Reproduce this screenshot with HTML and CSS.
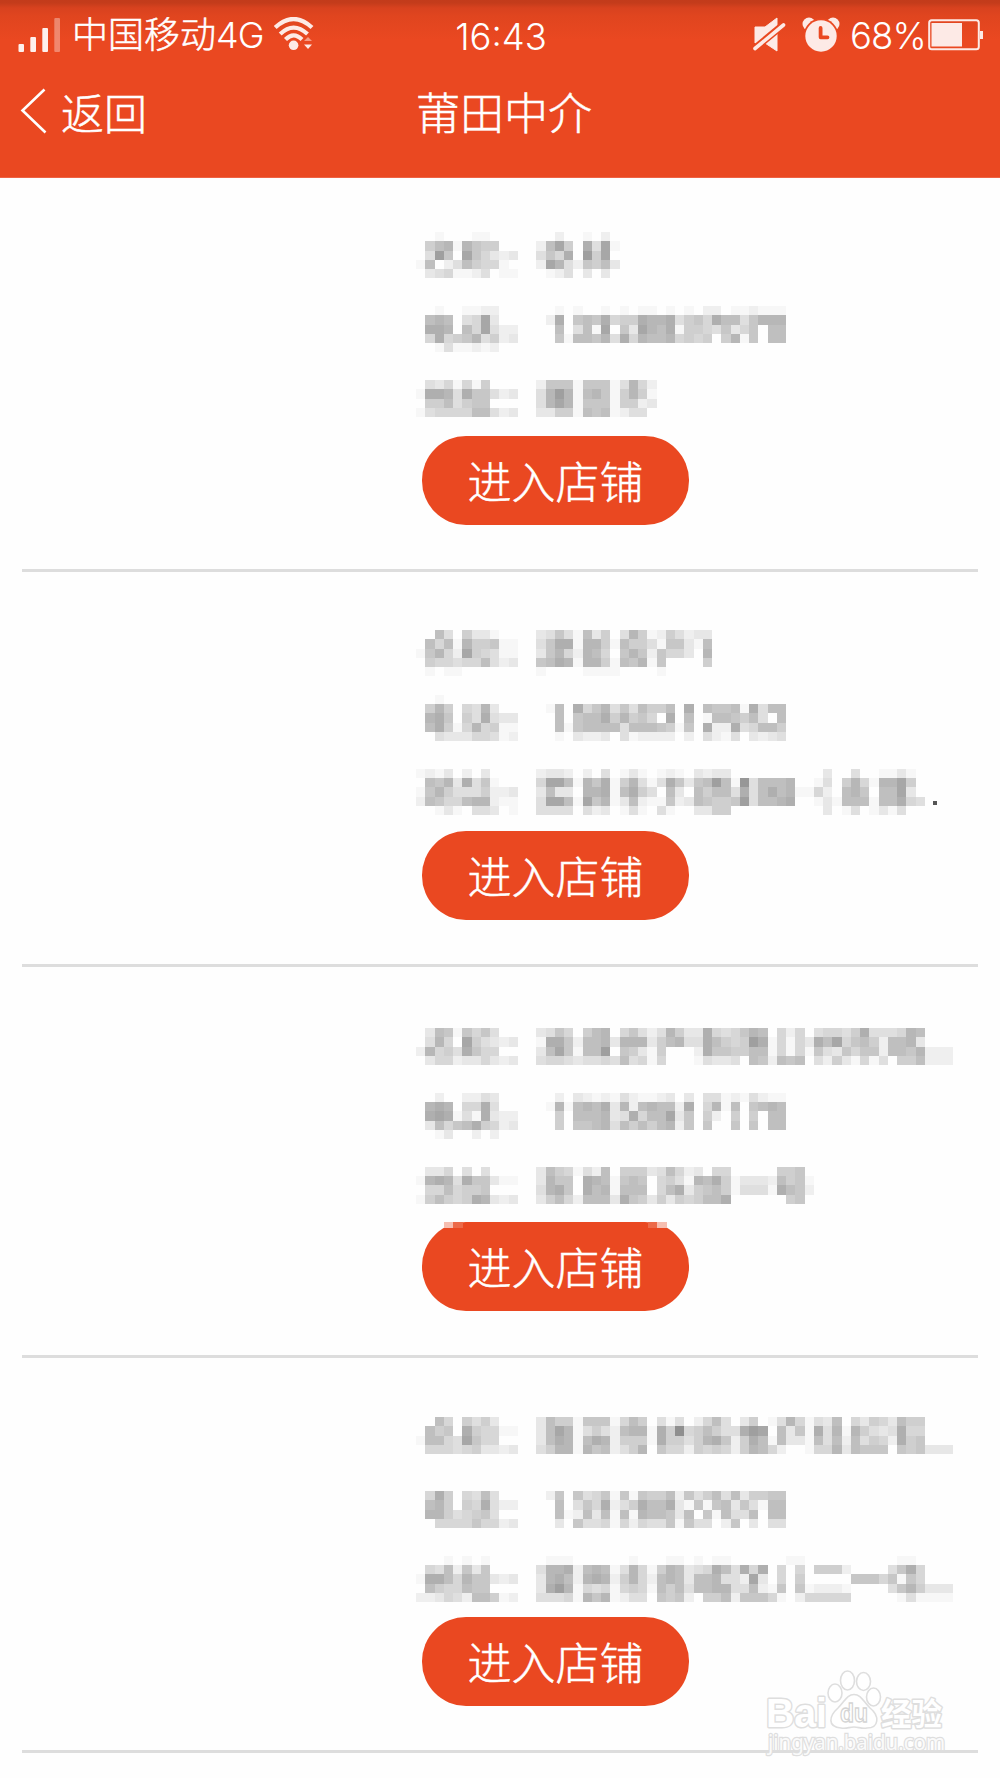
FILE: index.html
```html
<!DOCTYPE html>
<html lang="zh-CN">
<head>
<meta charset="utf-8">
<title>莆田中介</title>
<link rel="stylesheet" href="styles.css">
</head>
<body>
<header class="header">
  <div class="status">
    <div class="status-left">
      <svg class="signal" width="44" height="36" viewBox="0 0 44 36" fill="#fff">
        <rect x="0.5" y="27" width="5.5" height="8" rx="1" opacity=".92"/><rect x="12.3" y="20" width="5.7" height="15" rx="1" opacity=".92"/><rect x="24.3" y="11" width="5.7" height="24" rx="1" opacity=".92"/><rect x="36.3" y="1" width="5.7" height="34" rx="1" opacity=".35"/>
      </svg>
      <span class="carrier">中国移动<span class="net">4G</span></span>
      <svg class="wifi" width="40" height="34" viewBox="0 0 40 34" fill="none" stroke="#fdeae6" stroke-width="4.2">
        <path d="M1.2 10.5Q19.500-6.500 38 10.500M6.200 17Q19.500 4.200 33.500 17M11.500 22.500Q19.500 14.200 28 22.500"/>
        <circle cx="19.600" cy="28.300" r="4.800" fill="#fdeae6" stroke="none"/>
        <path d="M30 24L34 20L38 24Z" fill="#f59a83" stroke="none"/><path d="M30 27.500L34 32L38 27.500Z" fill="#fdeae6" stroke="none"/>
      </svg>
    </div>
    <div class="clock">16:43</div>
    <div class="status-right">
      <svg class="mute" width="33" height="36" viewBox="0 0 33 36">
        <path d="M2 10H12L24 1V34L12 26H2Z" fill="#fdeae6" stroke="#fdeae6" stroke-width="1" stroke-linejoin="round"/>
        <path d="M1 32L30 8" stroke="#ea4821" stroke-width="7"/>
        <path d="M2 31.500L30.500 8" stroke="#fdeae6" stroke-width="3.600" stroke-linecap="round"/>
      </svg>
      <svg class="alarm" width="38" height="36" viewBox="0 0 38 36">
        <circle cx="7" cy="7" r="6.500" fill="#fdeae6"/><circle cx="31" cy="7" r="6.500" fill="#fdeae6"/>
        <circle cx="19" cy="19" r="17.500" fill="#ea4821"/><circle cx="19" cy="19" r="15.700" fill="#fdeae6"/>
        <path d="M18.600 11V20.300H25.500" fill="none" stroke="#ea4821" stroke-width="3.800" stroke-linecap="round" stroke-linejoin="round"/>
      </svg>
      <span class="percent">68%</span>
      <svg class="battery" width="56" height="32" viewBox="0 0 56 32">
        <rect x="1.200" y="1.200" width="49.600" height="29" rx="2.500" fill="none" stroke="#fdeae6" stroke-width="2"/>
        <rect x="3.500" y="4" width="30.500" height="23.500" fill="#fdeae6"/><rect x="52" y="12" width="3" height="8" fill="#fdeae6"/>
      </svg>
    </div>
  </div>
  <nav class="nav">
    <a class="back">
      <svg width="28" height="48" viewBox="0 0 28 48"><path d="M24.500 2.500L2.500 23.500L25.500 45.500" fill="none" stroke="#fff" stroke-width="2.600"/></svg>
      <span>返回</span>
    </a>
    <h1 class="title">莆田中介</h1>
  </nav>
</header>

<main class="shops">
  <section class="shop shop-1"><div class="info"><svg class="mosaic" data-shop="0"></svg><button class="enter">进入店铺</button></div></section>
  <section class="shop shop-2"><div class="info"><svg class="mosaic" data-shop="1"></svg><i class="dot"></i><button class="enter">进入店铺</button></div></section>
  <section class="shop shop-3"><div class="info"><svg class="mosaic" data-shop="2"></svg><button class="enter"><i class="notch notch-left"></i>进入店铺<i class="notch notch-right"></i></button></div></section>
  <section class="shop shop-4"><div class="info"><svg class="mosaic" data-shop="3"></svg><button class="enter">进入店铺</button></div></section>
</main>

<svg class="watermark" width="200" height="100" viewBox="0 0 200 100">
  <g fill="#fff" stroke="#dedede" stroke-width="1.600">
    <ellipse cx="75" cy="33" rx="7" ry="9"/><ellipse cx="87.500" cy="20.500" rx="7" ry="9.500"/><ellipse cx="103.500" cy="21.500" rx="7" ry="9"/><ellipse cx="113.500" cy="37" rx="7" ry="9"/>
    <path d="M94 34.500C101 34.500 103 41 110 48C120 56 119 68 107 68C101 69 99 67 94 67C89 67 87 69 81 68C67 67 69 56 78 48C85 41 87 34.500 94 34.500Z"/>
    <g class="wm-bold" paint-order="stroke" stroke-width="3" stroke-linejoin="round">
      <text x="6" y="66.500" font-size="41" textLength="61" lengthAdjust="spacingAndGlyphs">Bai</text>
      <text x="121" y="65" font-size="31" textLength="61" lengthAdjust="spacingAndGlyphs">经验</text>
    </g>
    <text class="wm-du" x="80" y="62" font-size="25" textLength="28" lengthAdjust="spacingAndGlyphs" stroke="#d4d4d4" stroke-width="1.300">du</text>
    <text class="wm-url" x="8" y="90" font-size="21" textLength="177" lengthAdjust="spacingAndGlyphs" paint-order="stroke" stroke-width="2.500" fill-opacity=".9">jingyan.baidu.com</text>
  </g>
</svg>
<script src="mosaic.js"></script>
</body>
</html>
```

FILE: styles.css
```css
* { box-sizing: border-box; }

body {
  margin: 0;
  width: 1000px;
  height: 1778px;
  position: relative;
  overflow: hidden;
  background: #fefefe;
  font-family: "Noto Sans CJK SC", sans-serif;
  font-weight: 300;
}

svg { display: block; flex: none; }

.header {
  height: 178px;
  color: #fff;
  background: linear-gradient(#c23b1b 0, #c43c1b 3px, #d8421f 8px, #e0451f 16px, #ea4821 40px);
  border-bottom: 1px solid #ee6244;
}

.status {
  display: grid;
  grid-template-columns: 1fr auto 1fr;
  align-items: center;
  height: 70px;
  padding: 0 16px 0 18px;
}

.status-left, .status-right { display: flex; align-items: center; }
.status-right { justify-content: flex-end; }
.carrier {
  margin: -3px 0 0 10px;
  font-size: 36px;
  line-height: 52px;
  white-space: nowrap;
  -webkit-text-stroke: 0.5px #fff;
}
.net, .clock, .percent { font-family: Inter, sans-serif; -webkit-text-stroke: 0; }
.net { font-size: 36px; letter-spacing: -0.8px; }
.wifi { margin: 0 0 2px 10px; }
.clock, .percent { font-size: 36.5px; line-height: 44px; }
.clock { padding-top: 3px; }
.alarm { margin-left: 16px; }
.percent { margin-left: 10px; padding-top: 1px; letter-spacing: -0.8px; }
.battery { margin-left: 2px; }

.nav {
  display: grid;
  grid-template-columns: 1fr auto 1fr;
  align-items: center;
  height: 82px;
  padding: 0 20px;
  -webkit-text-stroke: 0.5px #fff;
}

.back { display: flex; align-items: center; gap: 13px; font-size: 43px; line-height: 60px; }
.title { margin: 0; padding-left: 8px; font-size: 44px; line-height: 60px; font-weight: 300; }

.shop {
  margin: 0 22px;
  padding-left: 394px;
  border-bottom: 3px solid #ddd;
}
.shop-1 { height: 394px; padding-top: 54px; }
.shop-2 { height: 395px; padding-top: 58px; }
.shop-3 { height: 391px; padding-top: 61px; }
.shop-4 { height: 395px; padding-top: 59px; }

.info {
  position: relative;
  display: flex;
  flex-direction: column;
  align-items: flex-start;
  height: 293px;
  justify-content: space-between;
}
.shop-2 .info { height: 290px; }
.shop-3 .info { height: 283px; }
.shop-4 .info { height: 289px; }

.enter {
  position: relative;
  width: 267px;
  height: 89px;
  margin-left: 6px;
  padding: 0 0 1px;
  border: 0;
  border-radius: 44px;
  background: #ea4821;
  color: #fff;
  font: 300 44px/60px "Noto Sans CJK SC", sans-serif;
  -webkit-text-stroke: 0.5px #fff;
}

.dot {
  position: absolute;
  left: 517px;
  top: 171px;
  width: 4px;
  height: 4px;
  background: #555;
}

.notch {
  position: absolute;
  top: 0;
  width: 19px;
  height: 6px;
}
.notch-left { left: 22px; background: linear-gradient(90deg, #f6beb0 50%, #ec6a49 50%); }
.notch-right { right: 22px; background: linear-gradient(90deg, #ec6a49 50%, #f6beb0 50%); }

.watermark { position: absolute; left: 760px; top: 1660px; }
.wm-bold { font-family: "Liberation Sans", "Noto Sans CJK SC", sans-serif; font-weight: 700; }
.wm-du { font-family: "Liberation Sans", sans-serif; font-weight: 700; }
.wm-url { font-family: "Noto Sans", sans-serif; font-weight: 400; }
```

FILE: mosaic.js
```js
// Privacy mosaic: every character is one cell, "." is blank, 1-f goes from light to dark.
const shops = [
`..1...11.......2..1.2
.68919766....28b6.a4b1
.4c7.b75323..475a.c6b
18.2486551...2b9427683
.3451124.11...124.3.3



..1..1122......1.1..1.1.11.1.1.22.112111
.898.45b3.....2a.787a566a99a4675a8847999
.aa9.85b422....8.481b.73b98a166547357.88
.5a56794623....7188794a598895656.6917.88
..1411212....



.4351516.....2777177714952
1aa94a77423..49c9189716961
.6684677.....49b9177716623
14555588423..336618781244.`,
`..84.6331....34741836.4961264233
.8581966711..47aa199618664177318
17952b65411..37952985.79727553.9
.6554558423..78a91996187917....6
.1.11........1....1111....1


..1..........
.696.5493.....18.a5794748668.a.87781a488
.9a7.64a433....8.788a69675.a.8.1887684.8
.8a61595611....817888848887617.a22a45886
..433355412....1.3223.412222.2.4214.3234



1213.2.3.....2332.2.4.131.121.3233..........3..4..1131
.8793a471....5bb8197a169414a7378c81d48889..14.695199b6
17964446223..3833.99a18a64.83.86884a48a891152.897.88b3
28755899211..4bb81b7913821172387667c4889a..131888188a54
..131.443.1..4444.423.141.41..3366..........3.14.1314`,
`.38717574....3475.689.574249633a545798.525.45546a444598
.495.b64323..1aa728893999368944a8656ca15153a8b578628893
29564a755....38b7188c.76316...2a77668815151743757728879222
.3552335323..45543445484515...14334.872878.42631514.668222



..2..2243......2.32121421123.3.441214211
.9a9.55a4.....191898a39289882a.5918.7898
.aba141a322....6.888934a588b37.62.6.6.88
.38578a6523....6.7789486868927.7..7.7.88
..13..2.2....



.335.4.4.....38651428.666348523.55.....667
19a94a77311..3977.a981787.564198a6133328671
.5585667.....49a7.a891888.58a3678614441a872
168656a9323..368528883a7636365688a......67`,
`..85.6463....386617771586.414.2584.36.14951438.53653866
.867.a65511..38b9146428991a6e568644acb.8371a49196434a55
18854b755....38a918a926661a66469a726a818331848284652a67
.5554563323..469919782469.75526565269852..155938777.767333




.5a6.5484.....27.74571717668274684836677
.896.65a422....8.475a246a88a317178374188
.99645674......812838181988738.718448.88
..555575523....3.744515254471744.27.3.44



...1.1.1......111......1...11.1.11......11..........11
.5482737.....499a289814951698345a84a5a.5.5.6662....47a5
1aa85977323..39a829a9269528983889442b3.5.6.....77757175
.8655877.....3ac915451565186848899448217.712221....4796333
22354288612..444519791244.7672.668277751.255555.....141111`
];

const CELL = 9.25;
const NS = "http://www.w3.org/2000/svg";

document.querySelectorAll(".mosaic").forEach((svg) => {
  const rows = shops[svg.dataset.shop].split("\n");
  svg.setAttribute("width", 58 * CELL);
  svg.setAttribute("height", rows.length * CELL);
  svg.setAttribute("shape-rendering", "crispEdges");
  rows.forEach((row, y) => [...row].forEach((level, x) => {
    if (level === ".") return;
    const grey = 255 - parseInt(level, 16) * 8;
    const cell = document.createElementNS(NS, "rect");
    cell.setAttribute("x", x * CELL);
    cell.setAttribute("y", y * CELL);
    cell.setAttribute("width", CELL);
    cell.setAttribute("height", CELL);
    cell.setAttribute("fill", `rgb(${grey},${grey},${grey})`);
    svg.append(cell);
  }));
});
```
